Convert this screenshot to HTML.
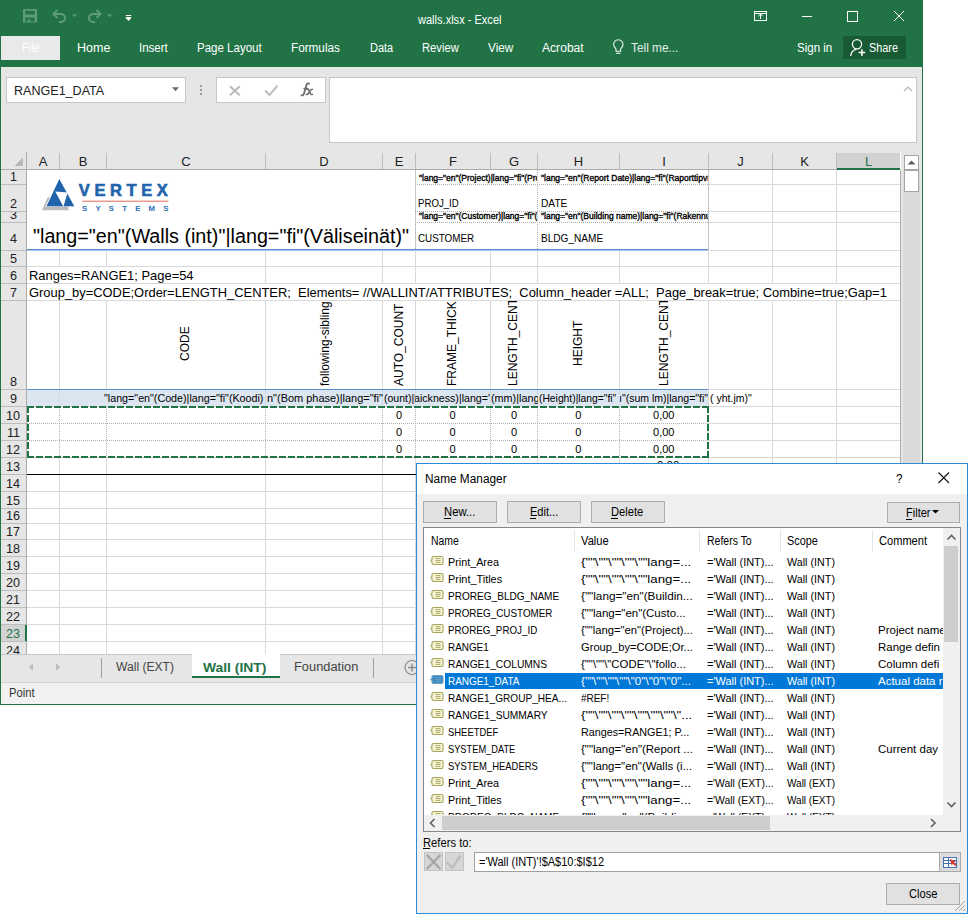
<!DOCTYPE html><html><head><meta charset="utf-8"><style>*{margin:0;padding:0}
html,body{width:968px;height:914px;overflow:hidden;background:#fff}
body{position:relative;font-family:"Liberation Sans",sans-serif}
body>div,body>svg{position:absolute}
.t{position:absolute;white-space:pre;line-height:1}
</style></head><body>
<div style="left:0px;top:0px;width:923px;height:67px;background:#217346"></div>
<div style="left:1px;top:67px;width:921px;height:85px;background:#e6e6e6"></div>
<div style="left:0px;top:67px;width:1px;height:638px;background:#217346"></div>
<div style="left:922px;top:0px;width:1px;height:705px;background:#217346"></div>
<div style="left:0px;top:704px;width:923px;height:1px;background:#217346"></div>
<svg style="position:absolute;left:0;top:0" width="140" height="36" viewBox="0 0 140 36">
<path fill="#5e9c78" fill-rule="evenodd" d="M23 9h14v13.6H23z M25.2 10.8h9.5v3.7h-9.5z M25.2 17.6h9.5v3.8h-9.5z"/>
<rect x="27.7" y="19.4" width="2.5" height="2.2" fill="#5e9c78"/>
<g fill="none" stroke="#5e9c78" stroke-width="2">
<path d="M54 14h7a4 4 0 0 1 0 8h-2"/><path d="M57.5 10l-4 4 4 4"/>
<path d="M100 14h-7a4 4 0 0 0 0 8h2"/><path d="M96.5 10l4 4-4 4"/>
</g>
<path d="M72 14.5h5.3l-2.65 2.6z M107 14.5h5.3l-2.65 2.6z" fill="#5e9c78"/>
<path d="M125.8 14.9h5.4v1.2h-5.4z M125.8 17h5.4v1.3h-5.4z M125.8 18.3h5.4l-2.7 2.8z" fill="#fff"/>
</svg>
<div class="t" style="left:418.00px;top:14.15px;font-size:12px;color:#fff;transform:scaleX(0.9207);transform-origin:0 0;">walls.xlsx - Excel</div>
<svg style="position:absolute;left:740;top:0" width="183" height="36" viewBox="740 0 183 36">
<g fill="none" stroke="#fff" stroke-width="1">
<rect x="754.5" y="11.5" width="12" height="9"/><path d="M754.5 13.5h12"/><path d="M760.5 19v-5M758.3 16.2l2.2-2.2 2.2 2.2"/>
<path d="M802 16.5h10"/>
<rect x="847.5" y="11.5" width="10" height="10"/>
<path d="M894 11l10 10M904 11l-10 10"/>
</g></svg>
<div style="left:1px;top:36px;width:59px;height:24px;background:#e9e9e9"></div>
<div class="t" style="left:21.50px;top:42.03px;font-size:12.5px;color:#fff;transform:scaleX(0.8781);transform-origin:0 0;">File</div>
<div class="t" style="left:77.00px;top:41.72px;font-size:12.5px;color:#fff;">Home</div>
<div class="t" style="left:139.00px;top:41.72px;font-size:12.5px;color:#fff;transform:scaleX(0.9216);transform-origin:0 0;">Insert</div>
<div class="t" style="left:197.30px;top:41.72px;font-size:12.5px;color:#fff;transform:scaleX(0.9216);transform-origin:0 0;">Page Layout</div>
<div class="t" style="left:290.90px;top:41.72px;font-size:12.5px;color:#fff;transform:scaleX(0.9387);transform-origin:0 0;">Formulas</div>
<div class="t" style="left:369.50px;top:41.72px;font-size:12.5px;color:#fff;transform:scaleX(0.8786);transform-origin:0 0;">Data</div>
<div class="t" style="left:422.20px;top:41.72px;font-size:12.5px;color:#fff;transform:scaleX(0.8976);transform-origin:0 0;">Review</div>
<div class="t" style="left:487.50px;top:41.72px;font-size:12.5px;color:#fff;transform:scaleX(0.9408);transform-origin:0 0;">View</div>
<div class="t" style="left:542.00px;top:41.72px;font-size:12.5px;color:#fff;transform:scaleX(0.9680);transform-origin:0 0;">Acrobat</div>
<div class="t" style="left:630.50px;top:41.72px;font-size:12.5px;color:#e3ede7;transform:scaleX(0.9480);transform-origin:0 0;">Tell me...</div>
<svg style="position:absolute;left:610;top:36" width="16" height="24" viewBox="610 36 16 24">
<g fill="none" stroke="#f2f7f4" stroke-width="1.1">
<path d="M616 51.2v-2.2C614.6 47.3 613.6 45.9 613.6 44.4A4.7 4.7 0 0 1 623 44.4C623 45.9 622 47.3 620.6 49v2.2z"/><path d="M616.2 53.3h4.2"/>
</g></svg>
<div class="t" style="left:797.00px;top:41.92px;font-size:12.5px;color:#fff;transform:scaleX(0.9233);transform-origin:0 0;">Sign in</div>
<div style="left:843px;top:36px;width:63px;height:23px;background:#185a34"></div>
<svg style="position:absolute;left:843;top:36" width="63" height="23" viewBox="843 36 63 23">
<g fill="none" stroke="#fff" stroke-width="1.3">
<circle cx="857" cy="44.3" r="4.6"/><path d="M850.6 56c0.6-3.7 2.9-6.2 5.8-6.6"/><path d="M858.6 52.6h6.6M861.9 49.3v6.8" stroke-width="1.5"/>
</g></svg>
<div class="t" style="left:869.00px;top:41.92px;font-size:12.5px;color:#fff;transform:scaleX(0.8693);transform-origin:0 0;">Share</div>
<div style="left:6px;top:77px;width:180px;height:26px;background:#fff;border:1px solid #c6c6c6;box-sizing:border-box"></div>
<div class="t" style="left:13.50px;top:84.65px;font-size:12px;color:#222;transform:scaleX(1.0460);transform-origin:0 0;">RANGE1_DATA</div>
<svg style="position:absolute;left:170px;top:84px" width="12" height="10"><path d="M2 3.3h7l-3.5 4z" fill="#6a6a6a"/></svg>
<div style="left:200px;top:85px;width:2px;height:2px;background:#9a9a9a"></div>
<div style="left:200px;top:89px;width:2px;height:2px;background:#9a9a9a"></div>
<div style="left:200px;top:93px;width:2px;height:2px;background:#9a9a9a"></div>
<div style="left:216px;top:77px;width:110px;height:26px;background:#fff;border:1px solid #c6c6c6;box-sizing:border-box"></div>
<svg style="position:absolute;left:216;top:77" width="110" height="26" viewBox="216 77 110 26">
<g fill="none" stroke="#bababa" stroke-width="1.9"><path d="M230 86.2l9.8 9M239.8 86.2l-9.8 9"/><path d="M265.2 90.5l4.3 4.6 8-9.4"/></g>
</svg>
<svg style="position:absolute;left:298px;top:80px" width="20" height="20"><g fill="none" stroke="#6e6e6e" stroke-linecap="round"><path d="M3.6 15.3c1.3 0.5 2-0.3 2.4-1.8l2.4-8.3c0.4-1.4 1.2-1.9 2.7-1.6" stroke-width="1.8"/><path d="M5.8 8.3h4" stroke-width="1.2"/><path d="M8.8 9.3c1.2-0.4 1.8 0 2.3 1.2l1.3 3c0.4 1 1 1.2 2 0.8M14.3 9.3c-1 0.2-1.8 1-2.8 2.4l-1.4 2c-0.6 0.8-1.2 1-1.8 0.7" stroke-width="1.6"/></g></svg>
<div style="left:329px;top:77px;width:588px;height:66px;background:#fff;border:1px solid #c6c6c6;box-sizing:border-box"></div>
<svg style="position:absolute;left:902;top:84" width="12" height="10"><path d="M2 7l4-4 4 4" fill="none" stroke="#b4b4b4" stroke-width="1.2"/></svg>
<div style="left:1px;top:152px;width:899px;height:17px;background:#e6e6e6"></div>
<div style="left:1px;top:169px;width:26px;height:485px;background:#e6e6e6"></div>
<div style="left:27px;top:170px;width:873px;height:484px;background:#fff"></div>
<div style="left:837px;top:153px;width:63px;height:16px;background:#d2d2d2"></div>
<div style="left:837px;top:168px;width:63px;height:2px;background:#217346"></div>
<div style="left:1px;top:169px;width:899px;height:1px;background:#ababab"></div>
<div style="left:26px;top:152px;width:1px;height:502px;background:#ababab"></div>
<div style="left:837px;top:168px;width:63px;height:2px;background:#217346"></div>
<svg style="position:absolute;left:12px;top:155px" width="14" height="13"><path d="M2.5 11H11V2.5z" fill="#b7b7b7"/></svg>
<div style="left:59px;top:153px;width:1px;height:16px;background:#bdbdbd"></div>
<div class="t" style="left:38.66px;top:155.00px;font-size:13px;color:#222;">A</div>
<div style="left:106px;top:153px;width:1px;height:16px;background:#bdbdbd"></div>
<div class="t" style="left:78.66px;top:155.00px;font-size:13px;color:#222;">B</div>
<div style="left:265px;top:153px;width:1px;height:16px;background:#bdbdbd"></div>
<div class="t" style="left:181.30px;top:155.00px;font-size:13px;color:#222;">C</div>
<div style="left:382px;top:153px;width:1px;height:16px;background:#bdbdbd"></div>
<div class="t" style="left:319.30px;top:155.00px;font-size:13px;color:#222;">D</div>
<div style="left:415px;top:153px;width:1px;height:16px;background:#bdbdbd"></div>
<div class="t" style="left:394.66px;top:155.00px;font-size:13px;color:#222;">E</div>
<div style="left:490px;top:153px;width:1px;height:16px;background:#bdbdbd"></div>
<div class="t" style="left:449.03px;top:155.00px;font-size:13px;color:#222;">F</div>
<div style="left:537px;top:153px;width:1px;height:16px;background:#bdbdbd"></div>
<div class="t" style="left:508.95px;top:155.00px;font-size:13px;color:#222;">G</div>
<div style="left:619px;top:153px;width:1px;height:16px;background:#bdbdbd"></div>
<div class="t" style="left:573.80px;top:155.00px;font-size:13px;color:#222;">H</div>
<div style="left:708px;top:153px;width:1px;height:16px;background:#bdbdbd"></div>
<div class="t" style="left:662.20px;top:155.00px;font-size:13px;color:#222;">I</div>
<div style="left:772px;top:153px;width:1px;height:16px;background:#bdbdbd"></div>
<div class="t" style="left:737.25px;top:155.00px;font-size:13px;color:#222;">J</div>
<div style="left:836px;top:153px;width:1px;height:16px;background:#bdbdbd"></div>
<div class="t" style="left:800.16px;top:155.00px;font-size:13px;color:#222;">K</div>
<div class="t" style="left:864.88px;top:155.00px;font-size:13px;color:#217346;">L</div>
<div style="left:27px;top:184px;width:873px;height:1px;background:#d9d9d9"></div>
<div style="left:1px;top:184px;width:25px;height:1px;background:#bdbdbd"></div>
<div style="left:27px;top:211px;width:873px;height:1px;background:#d9d9d9"></div>
<div style="left:1px;top:211px;width:25px;height:1px;background:#bdbdbd"></div>
<div style="left:27px;top:222px;width:873px;height:1px;background:#d9d9d9"></div>
<div style="left:1px;top:222px;width:25px;height:1px;background:#bdbdbd"></div>
<div style="left:27px;top:250px;width:873px;height:1px;background:#d9d9d9"></div>
<div style="left:1px;top:250px;width:25px;height:1px;background:#bdbdbd"></div>
<div style="left:27px;top:266px;width:873px;height:1px;background:#d9d9d9"></div>
<div style="left:1px;top:266px;width:25px;height:1px;background:#bdbdbd"></div>
<div style="left:27px;top:283px;width:873px;height:1px;background:#d9d9d9"></div>
<div style="left:1px;top:283px;width:25px;height:1px;background:#bdbdbd"></div>
<div style="left:27px;top:300px;width:873px;height:1px;background:#d9d9d9"></div>
<div style="left:1px;top:300px;width:25px;height:1px;background:#bdbdbd"></div>
<div style="left:27px;top:389px;width:873px;height:1px;background:#d9d9d9"></div>
<div style="left:1px;top:389px;width:25px;height:1px;background:#bdbdbd"></div>
<div style="left:27px;top:406px;width:873px;height:1px;background:#d9d9d9"></div>
<div style="left:1px;top:406px;width:25px;height:1px;background:#bdbdbd"></div>
<div style="left:27px;top:423px;width:873px;height:1px;background:#d9d9d9"></div>
<div style="left:1px;top:423px;width:25px;height:1px;background:#bdbdbd"></div>
<div style="left:27px;top:440px;width:873px;height:1px;background:#d9d9d9"></div>
<div style="left:1px;top:440px;width:25px;height:1px;background:#bdbdbd"></div>
<div style="left:27px;top:457px;width:873px;height:1px;background:#d9d9d9"></div>
<div style="left:1px;top:457px;width:25px;height:1px;background:#bdbdbd"></div>
<div style="left:27px;top:474px;width:873px;height:1px;background:#d9d9d9"></div>
<div style="left:1px;top:474px;width:25px;height:1px;background:#bdbdbd"></div>
<div style="left:27px;top:491px;width:873px;height:1px;background:#d9d9d9"></div>
<div style="left:1px;top:491px;width:25px;height:1px;background:#bdbdbd"></div>
<div style="left:27px;top:508px;width:873px;height:1px;background:#d9d9d9"></div>
<div style="left:1px;top:508px;width:25px;height:1px;background:#bdbdbd"></div>
<div style="left:27px;top:523px;width:873px;height:1px;background:#d9d9d9"></div>
<div style="left:1px;top:523px;width:25px;height:1px;background:#bdbdbd"></div>
<div style="left:27px;top:539px;width:873px;height:1px;background:#d9d9d9"></div>
<div style="left:1px;top:539px;width:25px;height:1px;background:#bdbdbd"></div>
<div style="left:27px;top:556px;width:873px;height:1px;background:#d9d9d9"></div>
<div style="left:1px;top:556px;width:25px;height:1px;background:#bdbdbd"></div>
<div style="left:27px;top:573px;width:873px;height:1px;background:#d9d9d9"></div>
<div style="left:1px;top:573px;width:25px;height:1px;background:#bdbdbd"></div>
<div style="left:27px;top:590px;width:873px;height:1px;background:#d9d9d9"></div>
<div style="left:1px;top:590px;width:25px;height:1px;background:#bdbdbd"></div>
<div style="left:27px;top:607px;width:873px;height:1px;background:#d9d9d9"></div>
<div style="left:1px;top:607px;width:25px;height:1px;background:#bdbdbd"></div>
<div style="left:27px;top:624px;width:873px;height:1px;background:#d9d9d9"></div>
<div style="left:1px;top:624px;width:25px;height:1px;background:#bdbdbd"></div>
<div style="left:27px;top:641px;width:873px;height:1px;background:#d9d9d9"></div>
<div style="left:1px;top:641px;width:25px;height:1px;background:#bdbdbd"></div>
<div style="left:59px;top:170px;width:1px;height:484px;background:#d9d9d9"></div>
<div style="left:106px;top:170px;width:1px;height:484px;background:#d9d9d9"></div>
<div style="left:265px;top:170px;width:1px;height:484px;background:#d9d9d9"></div>
<div style="left:382px;top:170px;width:1px;height:484px;background:#d9d9d9"></div>
<div style="left:415px;top:170px;width:1px;height:484px;background:#d9d9d9"></div>
<div style="left:490px;top:170px;width:1px;height:484px;background:#d9d9d9"></div>
<div style="left:537px;top:170px;width:1px;height:484px;background:#d9d9d9"></div>
<div style="left:619px;top:170px;width:1px;height:484px;background:#d9d9d9"></div>
<div style="left:708px;top:170px;width:1px;height:484px;background:#d9d9d9"></div>
<div style="left:772px;top:170px;width:1px;height:484px;background:#d9d9d9"></div>
<div style="left:836px;top:170px;width:1px;height:484px;background:#d9d9d9"></div>
<div style="left:900px;top:170px;width:1px;height:484px;background:#ababab"></div>
<div style="left:1px;top:170px;width:25px;height:14px;overflow:hidden"><div class="t" style="left:8.99px;top:-0.50px;font-size:13px;color:#222;transform:scaleX(0.97);transform-origin:0 0">1</div></div>
<div style="left:1px;top:185px;width:25px;height:26px;overflow:hidden"><div class="t" style="left:8.99px;top:11.50px;font-size:13px;color:#222;transform:scaleX(0.97);transform-origin:0 0">2</div></div>
<div style="left:1px;top:212px;width:25px;height:10px;overflow:hidden"><div class="t" style="left:8.99px;top:-4.50px;font-size:13px;color:#222;transform:scaleX(0.97);transform-origin:0 0">3</div></div>
<div style="left:1px;top:223px;width:25px;height:27px;overflow:hidden"><div class="t" style="left:8.99px;top:8.80px;font-size:13px;color:#222;transform:scaleX(0.97);transform-origin:0 0">4</div></div>
<div style="left:1px;top:251px;width:25px;height:15px;overflow:hidden"><div class="t" style="left:8.99px;top:0.50px;font-size:13px;color:#222;transform:scaleX(0.97);transform-origin:0 0">5</div></div>
<div style="left:1px;top:267px;width:25px;height:16px;overflow:hidden"><div class="t" style="left:8.99px;top:1.50px;font-size:13px;color:#222;transform:scaleX(0.97);transform-origin:0 0">6</div></div>
<div style="left:1px;top:284px;width:25px;height:16px;overflow:hidden"><div class="t" style="left:8.99px;top:1.50px;font-size:13px;color:#222;transform:scaleX(0.97);transform-origin:0 0">7</div></div>
<div style="left:1px;top:301px;width:25px;height:88px;overflow:hidden"><div class="t" style="left:8.99px;top:73.50px;font-size:13px;color:#222;transform:scaleX(0.97);transform-origin:0 0">8</div></div>
<div style="left:1px;top:390px;width:25px;height:16px;overflow:hidden"><div class="t" style="left:8.99px;top:1.50px;font-size:13px;color:#222;transform:scaleX(0.97);transform-origin:0 0">9</div></div>
<div style="left:1px;top:407px;width:25px;height:16px;overflow:hidden"><div class="t" style="left:5.48px;top:1.50px;font-size:13px;color:#222;transform:scaleX(0.97);transform-origin:0 0">10</div></div>
<div style="left:1px;top:424px;width:25px;height:16px;overflow:hidden"><div class="t" style="left:5.95px;top:1.50px;font-size:13px;color:#222;transform:scaleX(0.97);transform-origin:0 0">11</div></div>
<div style="left:1px;top:441px;width:25px;height:16px;overflow:hidden"><div class="t" style="left:5.48px;top:1.50px;font-size:13px;color:#222;transform:scaleX(0.97);transform-origin:0 0">12</div></div>
<div style="left:1px;top:458px;width:25px;height:16px;overflow:hidden"><div class="t" style="left:5.48px;top:1.50px;font-size:13px;color:#222;transform:scaleX(0.97);transform-origin:0 0">13</div></div>
<div style="left:1px;top:475px;width:25px;height:16px;overflow:hidden"><div class="t" style="left:5.48px;top:1.50px;font-size:13px;color:#222;transform:scaleX(0.97);transform-origin:0 0">14</div></div>
<div style="left:1px;top:492px;width:25px;height:16px;overflow:hidden"><div class="t" style="left:5.48px;top:1.50px;font-size:13px;color:#222;transform:scaleX(0.97);transform-origin:0 0">15</div></div>
<div style="left:1px;top:509px;width:25px;height:14px;overflow:hidden"><div class="t" style="left:5.48px;top:-0.50px;font-size:13px;color:#222;transform:scaleX(0.97);transform-origin:0 0">16</div></div>
<div style="left:1px;top:524px;width:25px;height:15px;overflow:hidden"><div class="t" style="left:5.48px;top:0.50px;font-size:13px;color:#222;transform:scaleX(0.97);transform-origin:0 0">17</div></div>
<div style="left:1px;top:540px;width:25px;height:16px;overflow:hidden"><div class="t" style="left:5.48px;top:1.50px;font-size:13px;color:#222;transform:scaleX(0.97);transform-origin:0 0">18</div></div>
<div style="left:1px;top:557px;width:25px;height:16px;overflow:hidden"><div class="t" style="left:5.48px;top:1.50px;font-size:13px;color:#222;transform:scaleX(0.97);transform-origin:0 0">19</div></div>
<div style="left:1px;top:574px;width:25px;height:16px;overflow:hidden"><div class="t" style="left:5.48px;top:1.50px;font-size:13px;color:#222;transform:scaleX(0.97);transform-origin:0 0">20</div></div>
<div style="left:1px;top:591px;width:25px;height:16px;overflow:hidden"><div class="t" style="left:5.48px;top:1.50px;font-size:13px;color:#222;transform:scaleX(0.97);transform-origin:0 0">21</div></div>
<div style="left:1px;top:608px;width:25px;height:16px;overflow:hidden"><div class="t" style="left:5.48px;top:1.50px;font-size:13px;color:#222;transform:scaleX(0.97);transform-origin:0 0">22</div></div>
<div style="left:1px;top:625px;width:25px;height:16px;background:#d2d2d2"></div>
<div style="left:25px;top:625px;width:2px;height:16px;background:#217346"></div>
<div style="left:1px;top:625px;width:25px;height:16px;overflow:hidden"><div class="t" style="left:5.48px;top:1.50px;font-size:13px;color:#217346;transform:scaleX(0.97);transform-origin:0 0">23</div></div>
<div style="left:1px;top:642px;width:25px;height:12px;overflow:hidden"><div class="t" style="left:5.48px;top:1.50px;font-size:13px;color:#222;transform:scaleX(0.97);transform-origin:0 0">24</div></div>
<div style="left:27px;top:170px;width:388px;height:80px;background:#fff"></div>
<div style="left:416px;top:170px;width:292px;height:80px;background:#fff"></div>
<div style="left:27px;top:267px;width:238px;height:16px;background:#fff"></div>
<div style="left:27px;top:284px;width:873px;height:16px;background:#fff"></div>
<div style="left:27px;top:390px;width:681px;height:16px;background:#dce6f1"></div>
<div style="left:415px;top:184px;width:294px;height:1px;background:repeating-linear-gradient(90deg,#b0b0b0 0 1px,transparent 1px 2px)"></div>
<div style="left:415px;top:211px;width:294px;height:1px;background:repeating-linear-gradient(90deg,#b0b0b0 0 1px,transparent 1px 2px)"></div>
<div style="left:415px;top:222px;width:294px;height:1px;background:repeating-linear-gradient(90deg,#b0b0b0 0 1px,transparent 1px 2px)"></div>
<div style="left:415px;top:170px;width:1px;height:80px;background:repeating-linear-gradient(180deg,#b0b0b0 0 1px,transparent 1px 2px)"></div>
<div style="left:537px;top:170px;width:1px;height:80px;background:repeating-linear-gradient(180deg,#b0b0b0 0 1px,transparent 1px 2px)"></div>
<div style="left:708px;top:170px;width:1px;height:80px;background:repeating-linear-gradient(180deg,#b0b0b0 0 1px,transparent 1px 2px)"></div>
<div style="left:27px;top:249px;width:681px;height:1px;background:#5b8fd0"></div>
<div style="left:27px;top:250px;width:681px;height:1px;background:#a9c4e8"></div>
<div style="left:27px;top:389px;width:681px;height:1px;background:#5b8fd0"></div>
<div style="left:27px;top:407px;width:681px;height:50px;background:#fff"></div>
<div style="left:27px;top:423px;width:681px;height:1px;background:repeating-linear-gradient(90deg,#b0b0b0 0 1px,transparent 1px 2px)"></div>
<div style="left:27px;top:440px;width:681px;height:1px;background:repeating-linear-gradient(90deg,#b0b0b0 0 1px,transparent 1px 2px)"></div>
<div style="left:59px;top:407px;width:1px;height:50px;background:repeating-linear-gradient(180deg,#b0b0b0 0 1px,transparent 1px 2px)"></div>
<div style="left:106px;top:407px;width:1px;height:50px;background:repeating-linear-gradient(180deg,#b0b0b0 0 1px,transparent 1px 2px)"></div>
<div style="left:265px;top:407px;width:1px;height:50px;background:repeating-linear-gradient(180deg,#b0b0b0 0 1px,transparent 1px 2px)"></div>
<div style="left:382px;top:407px;width:1px;height:50px;background:repeating-linear-gradient(180deg,#b0b0b0 0 1px,transparent 1px 2px)"></div>
<div style="left:415px;top:407px;width:1px;height:50px;background:repeating-linear-gradient(180deg,#b0b0b0 0 1px,transparent 1px 2px)"></div>
<div style="left:490px;top:407px;width:1px;height:50px;background:repeating-linear-gradient(180deg,#b0b0b0 0 1px,transparent 1px 2px)"></div>
<div style="left:537px;top:407px;width:1px;height:50px;background:repeating-linear-gradient(180deg,#b0b0b0 0 1px,transparent 1px 2px)"></div>
<div style="left:619px;top:407px;width:1px;height:50px;background:repeating-linear-gradient(180deg,#b0b0b0 0 1px,transparent 1px 2px)"></div>
<div style="left:59px;top:390px;width:1px;height:16px;background:repeating-linear-gradient(180deg,#c5d0dc 0 1px,transparent 1px 2px)"></div>
<div style="left:265px;top:390px;width:1px;height:16px;background:repeating-linear-gradient(180deg,#c5d0dc 0 1px,transparent 1px 2px)"></div>
<div style="left:382px;top:390px;width:1px;height:16px;background:repeating-linear-gradient(180deg,#c5d0dc 0 1px,transparent 1px 2px)"></div>
<div style="left:415px;top:390px;width:1px;height:16px;background:repeating-linear-gradient(180deg,#c5d0dc 0 1px,transparent 1px 2px)"></div>
<div style="left:490px;top:390px;width:1px;height:16px;background:repeating-linear-gradient(180deg,#c5d0dc 0 1px,transparent 1px 2px)"></div>
<div style="left:537px;top:390px;width:1px;height:16px;background:repeating-linear-gradient(180deg,#c5d0dc 0 1px,transparent 1px 2px)"></div>
<div style="left:619px;top:390px;width:1px;height:16px;background:repeating-linear-gradient(180deg,#c5d0dc 0 1px,transparent 1px 2px)"></div>
<div style="left:27px;top:474px;width:390px;height:1px;background:#000"></div>
<svg style="position:absolute;left:38px;top:176px" width="135" height="38" viewBox="38 176 135 38">
<path d="M47.5 197.5l2.5-0.5-4.5 9.5h23v3.8h-26.5z" fill="#bcbcbc"/>
<path d="M46.5 206.3L59.3 179 74.3 206.3z" fill="#1f63ad"/>
<path d="M55.3 191.4L67.6 192.6 63.4 206.8z" fill="#fff"/>
<text x="78.8" y="196.3" font-family="Liberation Sans" font-weight="700" font-size="16.5" fill="#1f63ad" stroke="#1f63ad" stroke-width="0.6" textLength="89" lengthAdjust="spacing">VERTEX</text>
<rect x="82.4" y="200.6" width="86" height="1.3" fill="#e98a7e"/>
<text x="82" y="211.2" font-family="Liberation Sans" font-weight="700" font-size="7.8" fill="#2f6fb5" textLength="86.5" lengthAdjust="spacing">SYSTEMS</text>
</svg>
<div class="t" style="left:33.30px;top:226.08px;font-size:20px;color:#000;transform:scaleX(0.9870);transform-origin:0 0;">&quot;lang=&quot;en&quot;(Walls (int)&quot;|lang=&quot;fi&quot;(Väliseinät)&quot;</div>
<div style="left:416px;top:170px;width:121px;height:14px;overflow:hidden"><div class="t" style="position:absolute;left:3.00px;top:3.61px;font-size:8.5px;color:#000;-webkit-text-stroke:0.35px #000;">&quot;lang=&quot;en&quot;(Project)|lang=&quot;fi&quot;(Projekti)</div></div>
<div style="left:538px;top:170px;width:170px;height:14px;overflow:hidden"><div class="t" style="position:absolute;left:3.00px;top:3.61px;font-size:8.5px;color:#000;-webkit-text-stroke:0.35px #000;">&quot;lang=&quot;en&quot;(Report Date)|lang=&quot;fi&quot;(Raporttipvm)</div></div>
<div style="left:416px;top:212px;width:121px;height:10px;overflow:hidden"><div class="t" style="position:absolute;left:3.00px;top:0.31px;font-size:8.5px;color:#000;-webkit-text-stroke:0.35px #000;">&quot;lang=&quot;en&quot;(Customer)|lang=&quot;fi&quot;(Asiakas)</div></div>
<div style="left:538px;top:212px;width:170px;height:10px;overflow:hidden"><div class="t" style="position:absolute;left:3.00px;top:0.31px;font-size:8.5px;color:#000;-webkit-text-stroke:0.35px #000;">&quot;lang=&quot;en&quot;(Building name)|lang=&quot;fi&quot;(Rakennuksen nimi)</div></div>
<div class="t" style="left:418.00px;top:198.12px;font-size:10.5px;color:#000;transform:scaleX(0.9178);transform-origin:0 0;">PROJ_ID</div>
<div class="t" style="left:540.60px;top:198.12px;font-size:10.5px;color:#000;transform:scaleX(0.9705);transform-origin:0 0;">DATE</div>
<div class="t" style="left:418.00px;top:233.42px;font-size:10.5px;color:#000;transform:scaleX(0.9353);transform-origin:0 0;">CUSTOMER</div>
<div class="t" style="left:540.60px;top:233.42px;font-size:10.5px;color:#000;transform:scaleX(0.9604);transform-origin:0 0;">BLDG_NAME</div>
<div class="t" style="left:29.00px;top:269.00px;font-size:13px;color:#000;transform:scaleX(0.9943);transform-origin:0 0;">Ranges=RANGE1; Page=54</div>
<div class="t" style="left:29.00px;top:286.00px;font-size:13px;color:#000;transform:scaleX(0.9931);transform-origin:0 0;">Group_by=CODE;Order=LENGTH_CENTER;  Elements= //WALLINT/ATTRIBUTES;  Column_header =ALL;  Page_break=true; Combine=true;Gap=1</div>
<div style="left:175.50px;top:301px;width:22px;height:61.80px;overflow:hidden"><div class="t" style="position:absolute;left:15.90px;top:59.80px;font-size:12px;transform-origin:0 0;transform:rotate(-90deg) translateY(-11.76px) ;">CODE</div></div>
<div style="left:315.00px;top:301px;width:22px;height:86.50px;overflow:hidden"><div class="t" style="position:absolute;left:15.90px;top:84.50px;font-size:12px;transform-origin:0 0;transform:rotate(-90deg) translateY(-11.76px) ;">following-sibling</div></div>
<div style="left:389.50px;top:301px;width:22px;height:86.50px;overflow:hidden"><div class="t" style="position:absolute;left:15.90px;top:84.50px;font-size:12px;transform-origin:0 0;transform:rotate(-90deg) translateY(-11.76px) ;">AUTO_COUNT</div></div>
<div style="left:442.50px;top:301px;width:22px;height:86.50px;overflow:hidden"><div class="t" style="position:absolute;left:15.90px;top:84.50px;font-size:12px;transform-origin:0 0;transform:rotate(-90deg) translateY(-11.76px) ;">FRAME_THICK</div></div>
<div style="left:503.50px;top:301px;width:22px;height:86.50px;overflow:hidden"><div class="t" style="position:absolute;left:15.90px;top:84.50px;font-size:12px;transform-origin:0 0;transform:rotate(-90deg) translateY(-11.76px) ;">LENGTH_CENT</div></div>
<div style="left:568.00px;top:301px;width:22px;height:67.00px;overflow:hidden"><div class="t" style="position:absolute;left:15.90px;top:65.00px;font-size:12px;transform-origin:0 0;transform:rotate(-90deg) translateY(-11.76px) ;">HEIGHT</div></div>
<div style="left:654.00px;top:301px;width:22px;height:86.50px;overflow:hidden"><div class="t" style="position:absolute;left:15.90px;top:84.50px;font-size:12px;transform-origin:0 0;transform:rotate(-90deg) translateY(-11.76px) ;">LENGTH_CENT</div></div>
<div style="left:95px;top:390px;width:170px;height:16px;overflow:hidden"><div class="t" style="position:absolute;left:9.00px;top:2.69px;font-size:11px;color:#000;transform:scaleX(0.9743);transform-origin:0 0;">&quot;lang=&quot;en&quot;(Code)|lang=&quot;fi&quot;(Koodi)</div></div>
<div style="left:265px;top:390px;width:118px;height:16px;overflow:hidden"><div class="t" style="position:absolute;left:1.50px;top:2.69px;font-size:11px;color:#000;transform:scaleX(0.9962);transform-origin:0 0;">n&quot;(Bom phase)|lang=&quot;fi&quot;</div></div>
<div style="left:383px;top:390px;width:32px;height:16px;overflow:hidden"><div class="t" style="position:absolute;left:0.50px;top:2.69px;font-size:11px;color:#000;transform:scaleX(0.9546);transform-origin:0 0;">(ount)|l</div></div>
<div style="left:415px;top:390px;width:75px;height:16px;overflow:hidden"><div class="t" style="position:absolute;left:-1.00px;top:2.69px;font-size:11px;color:#000;transform:scaleX(0.9662);transform-origin:0 0;">aickness)|lang=&#x27;</div></div>
<div style="left:490px;top:390px;width:48px;height:16px;overflow:hidden"><div class="t" style="position:absolute;left:0.60px;top:2.69px;font-size:11px;color:#000;transform:scaleX(0.9818);transform-origin:0 0;">(mm)|lang</div></div>
<div style="left:538px;top:390px;width:82px;height:16px;overflow:hidden"><div class="t" style="position:absolute;left:0.50px;top:2.69px;font-size:11px;color:#000;transform:scaleX(0.9366);transform-origin:0 0;">(Height)|lang=&quot;fi&quot;</div></div>
<div style="left:620px;top:390px;width:88px;height:16px;overflow:hidden"><div class="t" style="position:absolute;left:-1.00px;top:2.69px;font-size:11px;color:#000;transform:scaleX(0.9557);transform-origin:0 0;">ı&quot;(sum lm)|lang=&quot;fi&quot;</div></div>
<div style="left:708px;top:390px;width:52px;height:16px;overflow:hidden"><div class="t" style="position:absolute;left:1.70px;top:2.69px;font-size:11px;color:#000;transform:scaleX(0.9582);transform-origin:0 0;">( yht.jm)&quot;</div></div>
<div class="t" style="left:395.94px;top:409.69px;font-size:11px;color:#000;">0</div>
<div class="t" style="left:449.54px;top:409.69px;font-size:11px;color:#000;">0</div>
<div class="t" style="left:510.94px;top:409.69px;font-size:11px;color:#000;">0</div>
<div class="t" style="left:575.24px;top:409.69px;font-size:11px;color:#000;">0</div>
<div class="t" style="left:653.08px;top:409.69px;font-size:11px;color:#000;">0,00</div>
<div class="t" style="left:395.94px;top:426.69px;font-size:11px;color:#000;">0</div>
<div class="t" style="left:449.54px;top:426.69px;font-size:11px;color:#000;">0</div>
<div class="t" style="left:510.94px;top:426.69px;font-size:11px;color:#000;">0</div>
<div class="t" style="left:575.24px;top:426.69px;font-size:11px;color:#000;">0</div>
<div class="t" style="left:653.08px;top:426.69px;font-size:11px;color:#000;">0,00</div>
<div class="t" style="left:395.94px;top:443.69px;font-size:11px;color:#000;">0</div>
<div class="t" style="left:449.54px;top:443.69px;font-size:11px;color:#000;">0</div>
<div class="t" style="left:510.94px;top:443.69px;font-size:11px;color:#000;">0</div>
<div class="t" style="left:575.24px;top:443.69px;font-size:11px;color:#000;">0</div>
<div class="t" style="left:653.08px;top:443.69px;font-size:11px;color:#000;">0,00</div>
<div style="left:640px;top:458px;width:60px;height:5px;overflow:hidden"><div class="t" style="position:absolute;left:17.00px;top:1.77px;font-size:11.5px;color:#000;">0,00</div></div>
<div style="left:27px;top:406px;width:682px;height:2px;background:repeating-linear-gradient(90deg,#217346 0 7px,transparent 7px 9px)"></div>
<div style="left:27px;top:456px;width:682px;height:2px;background:repeating-linear-gradient(90deg,#217346 0 7px,transparent 7px 9px)"></div>
<div style="left:27px;top:406px;width:2px;height:52px;background:repeating-linear-gradient(180deg,#217346 0 7px,transparent 7px 9px)"></div>
<div style="left:707px;top:406px;width:2px;height:52px;background:repeating-linear-gradient(180deg,#217346 0 7px,transparent 7px 9px)"></div>
<div style="left:1px;top:654px;width:921px;height:28px;background:#e6e6e6"></div>
<div style="left:1px;top:654px;width:921px;height:1px;background:#c6c6c6"></div>
<div style="left:1px;top:682px;width:921px;height:22px;background:#f1f1f1"></div>
<div style="left:1px;top:682px;width:921px;height:1px;background:#d4d4d4"></div>
<svg style="position:absolute;left:20px;top:660px" width="50" height="14"><path d="M13 3l-4 4 4 4z M36 3l4 4-4 4z" fill="#bcbcbc"/></svg>
<div style="left:101px;top:658px;width:1px;height:20px;background:#9e9e9e"></div>
<div class="t" style="left:116.00px;top:661.42px;font-size:12.5px;color:#444;transform:scaleX(0.9674);transform-origin:0 0;">Wall (EXT)</div>
<div style="left:192px;top:654px;width:88px;height:24px;background:#fff"></div>
<div style="left:192px;top:676px;width:88px;height:2px;background:#217346"></div>
<div class="t" style="left:203.00px;top:661.40px;font-size:13px;color:#217346;font-weight:700;transform:scaleX(1.0650);transform-origin:0 0;">Wall (INT)</div>
<div class="t" style="left:294.40px;top:661.42px;font-size:12.5px;color:#444;transform:scaleX(1.0278);transform-origin:0 0;">Foundation</div>
<div style="left:373px;top:658px;width:1px;height:20px;background:#9e9e9e"></div>
<svg style="position:absolute;left:402px;top:658px" width="20" height="20"><circle cx="10" cy="9.5" r="7" fill="none" stroke="#8a8a8a" stroke-width="1.2"/><path d="M10 5.5v8M6 9.5h8" stroke="#8a8a8a" stroke-width="1.4"/></svg>
<div class="t" style="left:8.50px;top:686.85px;font-size:12px;color:#333;transform:scaleX(0.9326);transform-origin:0 0;">Point</div>
<div style="left:901px;top:152px;width:21px;height:502px;background:#e6e6e6"></div>
<div style="left:903px;top:170px;width:17px;height:484px;background:#dadada"></div>
<div style="left:904px;top:155px;width:15px;height:15px;background:#fff;border:1px solid #a6a6a6;box-sizing:border-box"></div>
<svg style="position:absolute;left:904px;top:155px" width="15" height="15"><path d="M3.5 9.5h8l-4-4z" fill="#5f5f5f"/></svg>
<div style="left:904px;top:170px;width:15px;height:22px;background:#fff;border:1px solid #a6a6a6;box-sizing:border-box"></div>
<div style="left:416px;top:463px;width:552px;height:451px;background:#f0f0f0;border:1px solid #2b8ad9;box-sizing:border-box"></div>
<div style="left:417px;top:464px;width:550px;height:30px;background:#fff"></div>
<div class="t" style="left:425.40px;top:472.65px;font-size:12px;color:#000;transform:scaleX(0.9867);transform-origin:0 0;">Name Manager</div>
<div class="t" style="left:895.75px;top:472.00px;font-size:13px;color:#000;transform:scaleX(0.8985);transform-origin:0 0;">?</div>
<svg style="position:absolute;left:936px;top:470px" width="16" height="16"><path d="M2.5 2.5l10.5 10.5M13 2.5L2.5 13" stroke="#111" stroke-width="1.1" fill="none"/></svg>
<div style="left:423px;top:501px;width:74px;height:22px;background:#e1e1e1;border:1px solid #adadad;box-sizing:border-box"></div>
<div style="left:507px;top:501px;width:74px;height:22px;background:#e1e1e1;border:1px solid #adadad;box-sizing:border-box"></div>
<div style="left:591px;top:501px;width:74px;height:22px;background:#e1e1e1;border:1px solid #adadad;box-sizing:border-box"></div>
<div style="left:887px;top:502px;width:73px;height:21px;background:#e1e1e1;border:1px solid #adadad;box-sizing:border-box"></div>
<div class="t" style="left:444.30px;top:506.15px;font-size:12px;color:#000;transform:scaleX(0.9417);transform-origin:0 0;">New...</div>
<div style="left:444.3px;top:518px;width:7px;height:1px;background:#000"></div>
<div class="t" style="left:529.50px;top:506.15px;font-size:12px;color:#000;transform:scaleX(0.9199);transform-origin:0 0;">Edit...</div>
<div style="left:529.5px;top:518px;width:6px;height:1px;background:#000"></div>
<div class="t" style="left:611.40px;top:506.15px;font-size:12px;color:#000;transform:scaleX(0.9283);transform-origin:0 0;">Delete</div>
<div style="left:611.4px;top:518px;width:7px;height:1px;background:#000"></div>
<div class="t" style="left:905.50px;top:506.85px;font-size:12px;color:#000;transform:scaleX(0.9186);transform-origin:0 0;">Filter</div>
<div style="left:905.5px;top:518.5px;width:6px;height:1px;background:#000"></div>
<svg style="position:absolute;left:931px;top:509px" width="10" height="6"><path d="M1 1h7l-3.5 3.5z" fill="#000"/></svg>
<div style="left:423px;top:527px;width:538px;height:305px;background:#fff;border:1px solid #828790;box-sizing:border-box"></div>
<div style="left:574px;top:530px;width:1px;height:22px;background:#e5e5e5"></div>
<div style="left:699px;top:530px;width:1px;height:22px;background:#e5e5e5"></div>
<div style="left:780px;top:530px;width:1px;height:22px;background:#e5e5e5"></div>
<div style="left:872px;top:530px;width:1px;height:22px;background:#e5e5e5"></div>
<div class="t" style="left:431.40px;top:535.35px;font-size:12px;color:#000;transform:scaleX(0.8652);transform-origin:0 0;">Name</div>
<div class="t" style="left:581.00px;top:535.35px;font-size:12px;color:#000;transform:scaleX(0.9330);transform-origin:0 0;">Value</div>
<div class="t" style="left:706.50px;top:535.35px;font-size:12px;color:#000;transform:scaleX(0.8743);transform-origin:0 0;">Refers To</div>
<div class="t" style="left:787.00px;top:535.35px;font-size:12px;color:#000;transform:scaleX(0.9025);transform-origin:0 0;">Scope</div>
<div class="t" style="left:878.60px;top:535.35px;font-size:12px;color:#000;transform:scaleX(0.9228);transform-origin:0 0;">Comment</div>
<div style="left:424px;top:528px;width:519px;height:287px;overflow:hidden"><svg style="position:absolute;left:5px;top:26.9px" width="15" height="11"><path d="M4.5 1.5h8a1.5 1.5 0 0 1 1.5 1.5v5a1.5 1.5 0 0 1-1.5 1.5h-8a1.5 1.5 0 0 1-1.5-1.5v-1.7l-1.2-0.8 1.2-0.8v-1.7a1.5 1.5 0 0 1 1.5-1.5z" fill="#f7f5d8" stroke="#a7a35c" stroke-width="1.1"/><path d="M6.5 3.6h5M6.5 5.5h5M6.5 7.4h5" stroke="#a7a35c" stroke-width="0.9"/></svg><div class="t" style="position:absolute;left:23.50px;top:28.77px;font-size:11.5px;color:#000;transform:scaleX(0.9372);transform-origin:0 0">Print_Area</div><div class="t" style="position:absolute;left:157.20px;top:28.77px;font-size:11.5px;color:#000;transform:scaleX(1.1552);transform-origin:0 0">{&quot;&quot;\&quot;&quot;\&quot;&quot;\&quot;&quot;\&quot;&quot;lang=...</div><div class="t" style="position:absolute;left:282.70px;top:28.77px;font-size:11.5px;color:#000;transform:scaleX(0.9540);transform-origin:0 0">=&#x27;Wall (INT)...</div><div class="t" style="position:absolute;left:363.00px;top:28.77px;font-size:11.5px;color:#000;transform:scaleX(0.9352);transform-origin:0 0">Wall (INT)</div><svg style="position:absolute;left:5px;top:43.9px" width="15" height="11"><path d="M4.5 1.5h8a1.5 1.5 0 0 1 1.5 1.5v5a1.5 1.5 0 0 1-1.5 1.5h-8a1.5 1.5 0 0 1-1.5-1.5v-1.7l-1.2-0.8 1.2-0.8v-1.7a1.5 1.5 0 0 1 1.5-1.5z" fill="#f7f5d8" stroke="#a7a35c" stroke-width="1.1"/><path d="M6.5 3.6h5M6.5 5.5h5M6.5 7.4h5" stroke="#a7a35c" stroke-width="0.9"/></svg><div class="t" style="position:absolute;left:23.50px;top:45.77px;font-size:11.5px;color:#000;transform:scaleX(0.9476);transform-origin:0 0">Print_Titles</div><div class="t" style="position:absolute;left:157.20px;top:45.77px;font-size:11.5px;color:#000;transform:scaleX(1.1552);transform-origin:0 0">{&quot;&quot;\&quot;&quot;\&quot;&quot;\&quot;&quot;\&quot;&quot;lang=...</div><div class="t" style="position:absolute;left:282.70px;top:45.77px;font-size:11.5px;color:#000;transform:scaleX(0.9540);transform-origin:0 0">=&#x27;Wall (INT)...</div><div class="t" style="position:absolute;left:363.00px;top:45.77px;font-size:11.5px;color:#000;transform:scaleX(0.9352);transform-origin:0 0">Wall (INT)</div><svg style="position:absolute;left:5px;top:60.9px" width="15" height="11"><path d="M4.5 1.5h8a1.5 1.5 0 0 1 1.5 1.5v5a1.5 1.5 0 0 1-1.5 1.5h-8a1.5 1.5 0 0 1-1.5-1.5v-1.7l-1.2-0.8 1.2-0.8v-1.7a1.5 1.5 0 0 1 1.5-1.5z" fill="#f7f5d8" stroke="#a7a35c" stroke-width="1.1"/><path d="M6.5 3.6h5M6.5 5.5h5M6.5 7.4h5" stroke="#a7a35c" stroke-width="0.9"/></svg><div class="t" style="position:absolute;left:23.50px;top:62.77px;font-size:11.5px;color:#000;transform:scaleX(0.8744);transform-origin:0 0">PROREG_BLDG_NAME</div><div class="t" style="position:absolute;left:157.20px;top:62.77px;font-size:11.5px;color:#000;transform:scaleX(1.0209);transform-origin:0 0">{&quot;&quot;lang=&quot;en&quot;(Buildin...</div><div class="t" style="position:absolute;left:282.70px;top:62.77px;font-size:11.5px;color:#000;transform:scaleX(0.9540);transform-origin:0 0">=&#x27;Wall (INT)...</div><div class="t" style="position:absolute;left:363.00px;top:62.77px;font-size:11.5px;color:#000;transform:scaleX(0.9352);transform-origin:0 0">Wall (INT)</div><svg style="position:absolute;left:5px;top:77.9px" width="15" height="11"><path d="M4.5 1.5h8a1.5 1.5 0 0 1 1.5 1.5v5a1.5 1.5 0 0 1-1.5 1.5h-8a1.5 1.5 0 0 1-1.5-1.5v-1.7l-1.2-0.8 1.2-0.8v-1.7a1.5 1.5 0 0 1 1.5-1.5z" fill="#f7f5d8" stroke="#a7a35c" stroke-width="1.1"/><path d="M6.5 3.6h5M6.5 5.5h5M6.5 7.4h5" stroke="#a7a35c" stroke-width="0.9"/></svg><div class="t" style="position:absolute;left:23.50px;top:79.77px;font-size:11.5px;color:#000;transform:scaleX(0.8575);transform-origin:0 0">PROREG_CUSTOMER</div><div class="t" style="position:absolute;left:157.20px;top:79.77px;font-size:11.5px;color:#000;transform:scaleX(0.9970);transform-origin:0 0">{&quot;&quot;lang=&quot;en&quot;(Custo...</div><div class="t" style="position:absolute;left:282.70px;top:79.77px;font-size:11.5px;color:#000;transform:scaleX(0.9540);transform-origin:0 0">=&#x27;Wall (INT)...</div><div class="t" style="position:absolute;left:363.00px;top:79.77px;font-size:11.5px;color:#000;transform:scaleX(0.9352);transform-origin:0 0">Wall (INT)</div><svg style="position:absolute;left:5px;top:94.9px" width="15" height="11"><path d="M4.5 1.5h8a1.5 1.5 0 0 1 1.5 1.5v5a1.5 1.5 0 0 1-1.5 1.5h-8a1.5 1.5 0 0 1-1.5-1.5v-1.7l-1.2-0.8 1.2-0.8v-1.7a1.5 1.5 0 0 1 1.5-1.5z" fill="#f7f5d8" stroke="#a7a35c" stroke-width="1.1"/><path d="M6.5 3.6h5M6.5 5.5h5M6.5 7.4h5" stroke="#a7a35c" stroke-width="0.9"/></svg><div class="t" style="position:absolute;left:23.50px;top:96.77px;font-size:11.5px;color:#000;transform:scaleX(0.8512);transform-origin:0 0">PROREG_PROJ_ID</div><div class="t" style="position:absolute;left:157.20px;top:96.77px;font-size:11.5px;color:#000;transform:scaleX(0.9774);transform-origin:0 0">{&quot;&quot;lang=&quot;en&quot;(Project)...</div><div class="t" style="position:absolute;left:282.70px;top:96.77px;font-size:11.5px;color:#000;transform:scaleX(0.9540);transform-origin:0 0">=&#x27;Wall (INT)...</div><div class="t" style="position:absolute;left:363.00px;top:96.77px;font-size:11.5px;color:#000;transform:scaleX(0.9352);transform-origin:0 0">Wall (INT)</div><div style="position:absolute;left:454px;top:94.5px;width:65px;height:16px;overflow:hidden"><div class="t" style="position:absolute;left:0;top:2.27px;font-size:11.5px;color:#000;transform:scaleX(0.9992);transform-origin:0 0">Project name</div></div><svg style="position:absolute;left:5px;top:111.9px" width="15" height="11"><path d="M4.5 1.5h8a1.5 1.5 0 0 1 1.5 1.5v5a1.5 1.5 0 0 1-1.5 1.5h-8a1.5 1.5 0 0 1-1.5-1.5v-1.7l-1.2-0.8 1.2-0.8v-1.7a1.5 1.5 0 0 1 1.5-1.5z" fill="#f7f5d8" stroke="#a7a35c" stroke-width="1.1"/><path d="M6.5 3.6h5M6.5 5.5h5M6.5 7.4h5" stroke="#a7a35c" stroke-width="0.9"/></svg><div class="t" style="position:absolute;left:23.50px;top:113.77px;font-size:11.5px;color:#000;transform:scaleX(0.8605);transform-origin:0 0">RANGE1</div><div class="t" style="position:absolute;left:157.20px;top:113.77px;font-size:11.5px;color:#000;transform:scaleX(0.9697);transform-origin:0 0">Group_by=CODE;Or...</div><div class="t" style="position:absolute;left:282.70px;top:113.77px;font-size:11.5px;color:#000;transform:scaleX(0.9540);transform-origin:0 0">=&#x27;Wall (INT)...</div><div class="t" style="position:absolute;left:363.00px;top:113.77px;font-size:11.5px;color:#000;transform:scaleX(0.9352);transform-origin:0 0">Wall (INT)</div><div style="position:absolute;left:454px;top:111.5px;width:65px;height:16px;overflow:hidden"><div class="t" style="position:absolute;left:0;top:2.27px;font-size:11.5px;color:#000;transform:scaleX(0.9992);transform-origin:0 0">Range defin</div></div><svg style="position:absolute;left:5px;top:128.9px" width="15" height="11"><path d="M4.5 1.5h8a1.5 1.5 0 0 1 1.5 1.5v5a1.5 1.5 0 0 1-1.5 1.5h-8a1.5 1.5 0 0 1-1.5-1.5v-1.7l-1.2-0.8 1.2-0.8v-1.7a1.5 1.5 0 0 1 1.5-1.5z" fill="#f7f5d8" stroke="#a7a35c" stroke-width="1.1"/><path d="M6.5 3.6h5M6.5 5.5h5M6.5 7.4h5" stroke="#a7a35c" stroke-width="0.9"/></svg><div class="t" style="position:absolute;left:23.50px;top:130.77px;font-size:11.5px;color:#000;transform:scaleX(0.8912);transform-origin:0 0">RANGE1_COLUMNS</div><div class="t" style="position:absolute;left:157.20px;top:130.77px;font-size:11.5px;color:#000;transform:scaleX(0.9901);transform-origin:0 0">{&quot;&quot;\&quot;&quot;\&quot;CODE&quot;\&quot;follo...</div><div class="t" style="position:absolute;left:282.70px;top:130.77px;font-size:11.5px;color:#000;transform:scaleX(0.9540);transform-origin:0 0">=&#x27;Wall (INT)...</div><div class="t" style="position:absolute;left:363.00px;top:130.77px;font-size:11.5px;color:#000;transform:scaleX(0.9352);transform-origin:0 0">Wall (INT)</div><div style="position:absolute;left:454px;top:128.5px;width:65px;height:16px;overflow:hidden"><div class="t" style="position:absolute;left:0;top:2.27px;font-size:11.5px;color:#000;transform:scaleX(0.9992);transform-origin:0 0">Column defi</div></div><div style="position:absolute;left:21px;top:144.5px;width:498px;height:16px;background:#0078d7"></div><svg style="position:absolute;left:5px;top:145.9px" width="15" height="11"><path d="M4.5 1.5h8a1.5 1.5 0 0 1 1.5 1.5v5a1.5 1.5 0 0 1-1.5 1.5h-8a1.5 1.5 0 0 1-1.5-1.5v-1.7l-1.2-0.8 1.2-0.8v-1.7a1.5 1.5 0 0 1 1.5-1.5z" fill="#3d8cc4" stroke="#6d9fc2" stroke-width="1.1"/><path d="M6.5 3.6h5M6.5 5.5h5M6.5 7.4h5" stroke="#6d9fc2" stroke-width="0.9"/></svg><div class="t" style="position:absolute;left:23.50px;top:147.77px;font-size:11.5px;color:#fff;transform:scaleX(0.8638);transform-origin:0 0">RANGE1_DATA</div><div class="t" style="position:absolute;left:157.20px;top:147.77px;font-size:11.5px;color:#fff;transform:scaleX(1.0092);transform-origin:0 0">{&quot;&quot;\&quot;&quot;\&quot;&quot;\&quot;&quot;\&quot;0&quot;\&quot;0&quot;\&quot;0&quot;...</div><div class="t" style="position:absolute;left:282.70px;top:147.77px;font-size:11.5px;color:#fff;transform:scaleX(0.9540);transform-origin:0 0">=&#x27;Wall (INT)...</div><div class="t" style="position:absolute;left:363.00px;top:147.77px;font-size:11.5px;color:#fff;transform:scaleX(0.9352);transform-origin:0 0">Wall (INT)</div><div style="position:absolute;left:454px;top:145.5px;width:65px;height:16px;overflow:hidden"><div class="t" style="position:absolute;left:0;top:2.27px;font-size:11.5px;color:#fff;transform:scaleX(0.9992);transform-origin:0 0">Actual data r</div></div><svg style="position:absolute;left:5px;top:162.9px" width="15" height="11"><path d="M4.5 1.5h8a1.5 1.5 0 0 1 1.5 1.5v5a1.5 1.5 0 0 1-1.5 1.5h-8a1.5 1.5 0 0 1-1.5-1.5v-1.7l-1.2-0.8 1.2-0.8v-1.7a1.5 1.5 0 0 1 1.5-1.5z" fill="#f7f5d8" stroke="#a7a35c" stroke-width="1.1"/><path d="M6.5 3.6h5M6.5 5.5h5M6.5 7.4h5" stroke="#a7a35c" stroke-width="0.9"/></svg><div class="t" style="position:absolute;left:23.50px;top:164.77px;font-size:11.5px;color:#000;transform:scaleX(0.8784);transform-origin:0 0">RANGE1_GROUP_HEA...</div><div class="t" style="position:absolute;left:157.20px;top:164.77px;font-size:11.5px;color:#000;transform:scaleX(0.8652);transform-origin:0 0">#REF!</div><div class="t" style="position:absolute;left:282.70px;top:164.77px;font-size:11.5px;color:#000;transform:scaleX(0.9540);transform-origin:0 0">=&#x27;Wall (INT)...</div><div class="t" style="position:absolute;left:363.00px;top:164.77px;font-size:11.5px;color:#000;transform:scaleX(0.9352);transform-origin:0 0">Wall (INT)</div><svg style="position:absolute;left:5px;top:179.9px" width="15" height="11"><path d="M4.5 1.5h8a1.5 1.5 0 0 1 1.5 1.5v5a1.5 1.5 0 0 1-1.5 1.5h-8a1.5 1.5 0 0 1-1.5-1.5v-1.7l-1.2-0.8 1.2-0.8v-1.7a1.5 1.5 0 0 1 1.5-1.5z" fill="#f7f5d8" stroke="#a7a35c" stroke-width="1.1"/><path d="M6.5 3.6h5M6.5 5.5h5M6.5 7.4h5" stroke="#a7a35c" stroke-width="0.9"/></svg><div class="t" style="position:absolute;left:23.50px;top:181.77px;font-size:11.5px;color:#000;transform:scaleX(0.8879);transform-origin:0 0">RANGE1_SUMMARY</div><div class="t" style="position:absolute;left:157.20px;top:181.77px;font-size:11.5px;color:#000;transform:scaleX(1.1467);transform-origin:0 0">{&quot;&quot;\&quot;&quot;\&quot;&quot;\&quot;&quot;\&quot;&quot;\&quot;&quot;\&quot;&quot;\&quot;...</div><div class="t" style="position:absolute;left:282.70px;top:181.77px;font-size:11.5px;color:#000;transform:scaleX(0.9540);transform-origin:0 0">=&#x27;Wall (INT)...</div><div class="t" style="position:absolute;left:363.00px;top:181.77px;font-size:11.5px;color:#000;transform:scaleX(0.9352);transform-origin:0 0">Wall (INT)</div><svg style="position:absolute;left:5px;top:196.9px" width="15" height="11"><path d="M4.5 1.5h8a1.5 1.5 0 0 1 1.5 1.5v5a1.5 1.5 0 0 1-1.5 1.5h-8a1.5 1.5 0 0 1-1.5-1.5v-1.7l-1.2-0.8 1.2-0.8v-1.7a1.5 1.5 0 0 1 1.5-1.5z" fill="#f7f5d8" stroke="#a7a35c" stroke-width="1.1"/><path d="M6.5 3.6h5M6.5 5.5h5M6.5 7.4h5" stroke="#a7a35c" stroke-width="0.9"/></svg><div class="t" style="position:absolute;left:23.50px;top:198.77px;font-size:11.5px;color:#000;transform:scaleX(0.8212);transform-origin:0 0">SHEETDEF</div><div class="t" style="position:absolute;left:157.20px;top:198.77px;font-size:11.5px;color:#000;transform:scaleX(0.9355);transform-origin:0 0">Ranges=RANGE1; P...</div><div class="t" style="position:absolute;left:282.70px;top:198.77px;font-size:11.5px;color:#000;transform:scaleX(0.9540);transform-origin:0 0">=&#x27;Wall (INT)...</div><div class="t" style="position:absolute;left:363.00px;top:198.77px;font-size:11.5px;color:#000;transform:scaleX(0.9352);transform-origin:0 0">Wall (INT)</div><svg style="position:absolute;left:5px;top:213.9px" width="15" height="11"><path d="M4.5 1.5h8a1.5 1.5 0 0 1 1.5 1.5v5a1.5 1.5 0 0 1-1.5 1.5h-8a1.5 1.5 0 0 1-1.5-1.5v-1.7l-1.2-0.8 1.2-0.8v-1.7a1.5 1.5 0 0 1 1.5-1.5z" fill="#f7f5d8" stroke="#a7a35c" stroke-width="1.1"/><path d="M6.5 3.6h5M6.5 5.5h5M6.5 7.4h5" stroke="#a7a35c" stroke-width="0.9"/></svg><div class="t" style="position:absolute;left:23.50px;top:215.77px;font-size:11.5px;color:#000;transform:scaleX(0.8058);transform-origin:0 0">SYSTEM_DATE</div><div class="t" style="position:absolute;left:157.20px;top:215.77px;font-size:11.5px;color:#000;transform:scaleX(0.9941);transform-origin:0 0">{&quot;&quot;lang=&quot;en&quot;(Report ...</div><div class="t" style="position:absolute;left:282.70px;top:215.77px;font-size:11.5px;color:#000;transform:scaleX(0.9540);transform-origin:0 0">=&#x27;Wall (INT)...</div><div class="t" style="position:absolute;left:363.00px;top:215.77px;font-size:11.5px;color:#000;transform:scaleX(0.9352);transform-origin:0 0">Wall (INT)</div><div style="position:absolute;left:454px;top:213.5px;width:65px;height:16px;overflow:hidden"><div class="t" style="position:absolute;left:0;top:2.27px;font-size:11.5px;color:#000;transform:scaleX(0.9992);transform-origin:0 0">Current day</div></div><svg style="position:absolute;left:5px;top:230.9px" width="15" height="11"><path d="M4.5 1.5h8a1.5 1.5 0 0 1 1.5 1.5v5a1.5 1.5 0 0 1-1.5 1.5h-8a1.5 1.5 0 0 1-1.5-1.5v-1.7l-1.2-0.8 1.2-0.8v-1.7a1.5 1.5 0 0 1 1.5-1.5z" fill="#f7f5d8" stroke="#a7a35c" stroke-width="1.1"/><path d="M6.5 3.6h5M6.5 5.5h5M6.5 7.4h5" stroke="#a7a35c" stroke-width="0.9"/></svg><div class="t" style="position:absolute;left:23.50px;top:232.77px;font-size:11.5px;color:#000;transform:scaleX(0.8224);transform-origin:0 0">SYSTEM_HEADERS</div><div class="t" style="position:absolute;left:157.20px;top:232.77px;font-size:11.5px;color:#000;transform:scaleX(0.9914);transform-origin:0 0">{&quot;&quot;lang=&quot;en&quot;(Walls (i...</div><div class="t" style="position:absolute;left:282.70px;top:232.77px;font-size:11.5px;color:#000;transform:scaleX(0.9540);transform-origin:0 0">=&#x27;Wall (INT)...</div><div class="t" style="position:absolute;left:363.00px;top:232.77px;font-size:11.5px;color:#000;transform:scaleX(0.9352);transform-origin:0 0">Wall (INT)</div><svg style="position:absolute;left:5px;top:247.9px" width="15" height="11"><path d="M4.5 1.5h8a1.5 1.5 0 0 1 1.5 1.5v5a1.5 1.5 0 0 1-1.5 1.5h-8a1.5 1.5 0 0 1-1.5-1.5v-1.7l-1.2-0.8 1.2-0.8v-1.7a1.5 1.5 0 0 1 1.5-1.5z" fill="#f7f5d8" stroke="#a7a35c" stroke-width="1.1"/><path d="M6.5 3.6h5M6.5 5.5h5M6.5 7.4h5" stroke="#a7a35c" stroke-width="0.9"/></svg><div class="t" style="position:absolute;left:23.50px;top:249.77px;font-size:11.5px;color:#000;transform:scaleX(0.9390);transform-origin:0 0">Print_Area</div><div class="t" style="position:absolute;left:157.20px;top:249.77px;font-size:11.5px;color:#000;transform:scaleX(1.1552);transform-origin:0 0">{&quot;&quot;\&quot;&quot;\&quot;&quot;\&quot;&quot;\&quot;&quot;lang=...</div><div class="t" style="position:absolute;left:282.70px;top:249.77px;font-size:11.5px;color:#000;transform:scaleX(0.9042);transform-origin:0 0">=&#x27;Wall (EXT)...</div><div class="t" style="position:absolute;left:363.00px;top:249.77px;font-size:11.5px;color:#000;transform:scaleX(0.8700);transform-origin:0 0">Wall (EXT)</div><svg style="position:absolute;left:5px;top:264.9px" width="15" height="11"><path d="M4.5 1.5h8a1.5 1.5 0 0 1 1.5 1.5v5a1.5 1.5 0 0 1-1.5 1.5h-8a1.5 1.5 0 0 1-1.5-1.5v-1.7l-1.2-0.8 1.2-0.8v-1.7a1.5 1.5 0 0 1 1.5-1.5z" fill="#f7f5d8" stroke="#a7a35c" stroke-width="1.1"/><path d="M6.5 3.6h5M6.5 5.5h5M6.5 7.4h5" stroke="#a7a35c" stroke-width="0.9"/></svg><div class="t" style="position:absolute;left:23.50px;top:266.77px;font-size:11.5px;color:#000;transform:scaleX(0.9388);transform-origin:0 0">Print_Titles</div><div class="t" style="position:absolute;left:157.20px;top:266.77px;font-size:11.5px;color:#000;transform:scaleX(1.1552);transform-origin:0 0">{&quot;&quot;\&quot;&quot;\&quot;&quot;\&quot;&quot;\&quot;&quot;lang=...</div><div class="t" style="position:absolute;left:282.70px;top:266.77px;font-size:11.5px;color:#000;transform:scaleX(0.9042);transform-origin:0 0">=&#x27;Wall (EXT)...</div><div class="t" style="position:absolute;left:363.00px;top:266.77px;font-size:11.5px;color:#000;transform:scaleX(0.8700);transform-origin:0 0">Wall (EXT)</div><svg style="position:absolute;left:5px;top:281.9px" width="15" height="11"><path d="M4.5 1.5h8a1.5 1.5 0 0 1 1.5 1.5v5a1.5 1.5 0 0 1-1.5 1.5h-8a1.5 1.5 0 0 1-1.5-1.5v-1.7l-1.2-0.8 1.2-0.8v-1.7a1.5 1.5 0 0 1 1.5-1.5z" fill="#f7f5d8" stroke="#a7a35c" stroke-width="1.1"/><path d="M6.5 3.6h5M6.5 5.5h5M6.5 7.4h5" stroke="#a7a35c" stroke-width="0.9"/></svg><div class="t" style="position:absolute;left:23.50px;top:283.77px;font-size:11.5px;color:#000;transform:scaleX(0.8744);transform-origin:0 0">PROREG_BLDG_NAME</div><div class="t" style="position:absolute;left:157.20px;top:283.77px;font-size:11.5px;color:#000;transform:scaleX(1.0209);transform-origin:0 0">{&quot;&quot;lang=&quot;en&quot;(Buildin...</div><div class="t" style="position:absolute;left:282.70px;top:283.77px;font-size:11.5px;color:#000;transform:scaleX(0.9042);transform-origin:0 0">=&#x27;Wall (EXT)...</div><div class="t" style="position:absolute;left:363.00px;top:283.77px;font-size:11.5px;color:#000;transform:scaleX(0.8700);transform-origin:0 0">Wall (EXT)</div></div>
<div style="left:943px;top:528px;width:17px;height:287px;background:#f0f0f0"></div>
<div style="left:944px;top:546px;width:14px;height:96px;background:#cdcdcd"></div>
<svg style="position:absolute;left:943px;top:530px" width="17" height="14"><path d="M4.5 9.5l4-4 4 4" fill="none" stroke="#606060" stroke-width="1.6"/></svg>
<svg style="position:absolute;left:943px;top:798px" width="17" height="14"><path d="M4.5 4.5l4 4 4-4" fill="none" stroke="#606060" stroke-width="1.6"/></svg>
<div style="left:424px;top:815px;width:536px;height:16px;background:#f0f0f0"></div>
<div style="left:442px;top:816px;width:328px;height:14px;background:#cdcdcd"></div>
<svg style="position:absolute;left:424px;top:815px" width="16" height="16"><path d="M10.5 4l-4 4 4 4" fill="none" stroke="#606060" stroke-width="1.6"/></svg>
<svg style="position:absolute;left:925px;top:815px" width="16" height="16"><path d="M6 4l4 4-4 4" fill="none" stroke="#606060" stroke-width="1.6"/></svg>
<div class="t" style="left:423.20px;top:836.85px;font-size:12px;color:#000;transform:scaleX(0.9346);transform-origin:0 0;">Refers to:</div>
<div style="left:423.2px;top:848px;width:7px;height:1px;background:#000"></div>
<div style="left:424px;top:852px;width:19px;height:19px;background:#d6d6d6;border:1px solid #c3c3c3;box-sizing:border-box"></div>
<div style="left:445px;top:852px;width:19px;height:19px;background:#d6d6d6;border:1px solid #c3c3c3;box-sizing:border-box"></div>
<svg style="position:absolute;left:424px;top:852px" width="40" height="19"><path d="M2.8 3l13.6 14M16.4 3L2.8 17" stroke="#a4a4a4" stroke-width="2.2"/><path d="M23 10.5l5 5.2 8.6-12" fill="none" stroke="#bcbcbc" stroke-width="2.2"/></svg>
<div style="left:474px;top:852px;width:466px;height:20px;background:#fff;border:1px solid #a0a0a0;box-sizing:border-box"></div>
<div class="t" style="left:479.00px;top:856.35px;font-size:12px;color:#000;transform:scaleX(0.9155);transform-origin:0 0;">=&#x27;Wall (INT)&#x27;!$A$10:$I$12</div>
<div style="left:939px;top:852px;width:22px;height:20px;background:#dcdcdc;border:1px solid #a9a9a9;box-sizing:border-box"></div>
<svg style="position:absolute;left:939px;top:852px" width="22" height="20">
<rect x="4.5" y="5.5" width="13" height="10" fill="#fff" stroke="#4a6fb5" stroke-width="1"/>
<path d="M4.5 8.5h13M4.5 11.5h13M9.5 5.5v10" stroke="#4a6fb5" stroke-width="1"/>
<path d="M11 7l6 2.5-2 1 2.5 2.5-1.2 1.2-2.5-2.5-1 2z" fill="#d43a2a"/>
</svg>
<div style="left:886px;top:883px;width:74px;height:22px;background:#e1e1e1;border:1px solid #adadad;box-sizing:border-box"></div>
<div class="t" style="left:908.75px;top:887.65px;font-size:12px;color:#000;transform:scaleX(0.9287);transform-origin:0 0;">Close</div>
<svg style="position:absolute;left:952px;top:898px" width="14" height="14"><path d="M13 3L3 13M13 7L7 13M13 11l-2 2" stroke="#a0a0a0" stroke-width="1"/></svg>
</body></html>
